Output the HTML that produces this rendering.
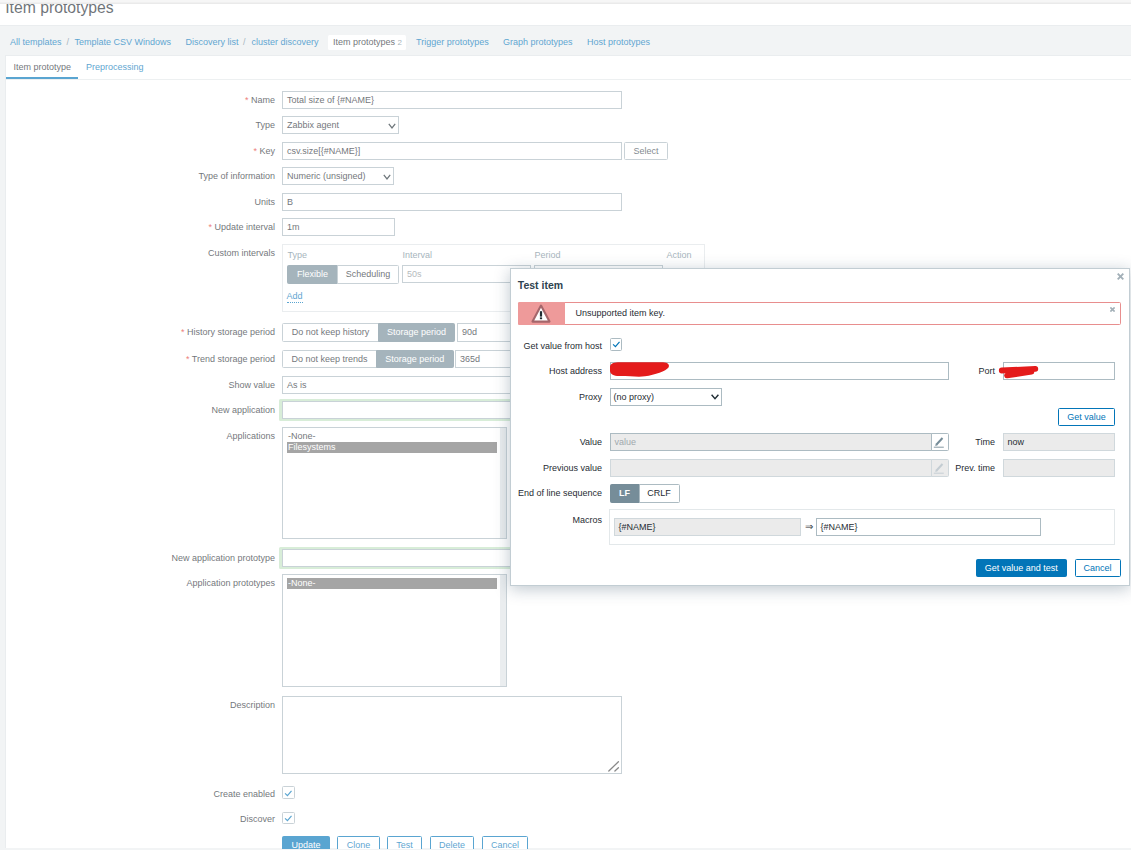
<!DOCTYPE html>
<html lang="en">
<head>
<meta charset="utf-8">
<title>Item prototypes</title>
<style>
*{box-sizing:border-box;margin:0;padding:0}
html,body{width:1131px;height:850px;overflow:hidden;background:#ebeef0}
body{font-family:"Liberation Sans",Arial,sans-serif;font-size:9px;color:#1f2c33;position:relative}
#page{position:absolute;left:0;top:0;width:1131px;height:850px;overflow:hidden;background:#ebeef0}
.abs{position:absolute}
a,.lnk{color:#0275b8;text-decoration:none}
.hdr{position:absolute;left:0;top:3.5px;width:1131px;height:22px;overflow:hidden;background:#fff;border-bottom:1px solid #dfe4e7}
h1{position:absolute;left:5.2px;top:-5.1px;font-size:15.75px;font-weight:normal;line-height:20px;color:#1f2c33;white-space:nowrap}
.nav{position:absolute;top:35px;height:15px;line-height:15px;white-space:nowrap}
.nav.sel{background:#fff;border-radius:1.5px;color:#1f2c33}
.sep{color:#768d99}
.content{position:absolute;left:5px;top:55px;width:1126px;height:793px;background:#fff;border:1px solid #dfe4e7;border-right:0;border-bottom:0}
.tabline{position:absolute;left:6px;top:79px;width:1125px;height:1px;background:#e4e8ea}
.tab{position:absolute;top:60px;height:15px;line-height:15px}
.tabsel{position:absolute;left:6px;top:76.75px;width:72px;height:2.25px;background:#0275b8}
.lbl{position:absolute;left:0;width:275px;text-align:right;height:18px;line-height:18px;white-space:nowrap}
.req{color:#e33734}
.inp{position:absolute;height:18px;line-height:16px;border:1px solid #acbbc2;background:#fff;padding:0 0 0 4px;white-space:nowrap;overflow:hidden}
.inp.dis{background:#ebebeb;border-color:#d0d8dc}
.ph{color:#a0a8ad}
.sel .arr{position:absolute;right:1.8px;top:5.5px;width:8px;height:6px}
.box{position:absolute;border:1px solid #dfe4e7;background:#fff}
.th{position:absolute;color:#768d99;height:12px;line-height:12px}
.rb{position:absolute;height:19px;line-height:17px;border:1px solid #acbbc2;background:#fff;text-align:center;white-space:nowrap}
.rb.on{background:#768d99;border-color:#768d99;color:#fff}
.rb.l{border-radius:1.5px 0 0 1.5px}
.rb.r{border-radius:0 1.5px 1.5px 0}
.btn{position:absolute;height:18px;line-height:16px;border:1px solid #0275b8;border-radius:1.5px;text-align:center;white-space:nowrap;background:#fff;color:#0275b8}
.btn.pri{background:#0275b8;color:#fff}
.btn.grey{border-color:#acbbc2;color:#3c4a52}
.lst{position:absolute;border:1px solid #acbbc2;background:#fff}
.lst .sb{position:absolute;right:0;top:0;bottom:0;width:6.5px;background:#dfe4e7}
.opt{position:absolute;left:4px;height:11.2px;line-height:11.2px;padding-left:1px}
.opt.on{background:#767676;color:#fff}
.cb{position:absolute;width:12px;height:12px;border:1px solid #acbbc2;border-radius:1.5px;background:#fff}
.cb svg{position:absolute;left:1px;top:1.2px;width:8.6px;height:8.6px}
.green{position:absolute;border:3px solid #c4e3c4;border-radius:1.5px}
#ovl{position:absolute;left:0;top:0;width:1131px;height:850px;background:#fff;opacity:.35}
#dlg{position:absolute;left:510px;top:268px;width:620px;height:318px;background:#fff;border:1px solid #c2cdd3;box-shadow:0 3px 15px 0 rgba(20,55,80,.28)}
#dlgi{position:absolute;left:0;top:-1px;width:618px;height:317px;white-space:nowrap}
#dlg .lbl{left:0;width:91px}
#dlg h4{position:absolute;left:6.8px;top:9.5px;font-size:10.5px;line-height:14px;font-weight:bold;color:#2f4350}
.topstrip{position:absolute;left:0;top:0;width:1131px;height:3.5px;background:linear-gradient(#f6f6f6 0,#f6f6f6 2.4px,#eaeaea 2.6px,#eaeaea 3.5px)}
.bot{position:absolute;left:0;top:849px;width:1131px;height:1px;background:#ebeef0}
</style>
</head>
<body>
<div id="page">
  <div class="hdr"><h1>Item prototypes</h1></div>

  <a class="nav" style="left:10px">All templates</a>
  <span class="nav sep" style="left:66.5px">/</span>
  <a class="nav" style="left:74.4px">Template CSV Windows</a>
  <a class="nav" style="left:185.5px">Discovery list</a>
  <span class="nav sep" style="left:243px">/</span>
  <a class="nav" style="left:251.5px">cluster discovery</a>
  <span class="nav sel" style="left:328px;width:78px;padding-left:5px">Item prototypes <span class="sep" style="font-size:8px">2</span></span>
  <a class="nav" style="left:416px">Trigger prototypes</a>
  <a class="nav" style="left:503px">Graph prototypes</a>
  <a class="nav" style="left:587px">Host prototypes</a>

  <div class="content"></div>
  <div class="tabline"></div>
  <span class="tab" style="left:13.5px">Item prototype</span>
  <a class="tab" style="left:86px">Preprocessing</a>
  <div class="tabsel"></div>

  <!-- form -->
  <div class="lbl" style="top:91px"><span class="req">*</span> Name</div>
  <div class="inp" style="left:282px;top:91px;width:340px">Total size of {#NAME}</div>

  <div class="lbl" style="top:116px">Type</div>
  <div class="inp sel" style="left:282px;top:116px;width:117px">Zabbix agent<svg class="arr" viewBox="0 0 8 6"><path d="M0.8 0.8 L4 4.9 L7.2 0.8" fill="none" stroke="#1f2c33" stroke-width="1.2"/></svg></div>

  <div class="lbl" style="top:142px"><span class="req">*</span> Key</div>
  <div class="inp" style="left:282px;top:142px;width:340px">csv.size[{#NAME}]</div>
  <div class="btn grey" style="left:624px;top:142px;width:44px">Select</div>

  <div class="lbl" style="top:167px">Type of information</div>
  <div class="inp sel" style="left:282px;top:167px;width:112px">Numeric (unsigned)<svg class="arr" viewBox="0 0 8 6"><path d="M0.8 0.8 L4 4.9 L7.2 0.8" fill="none" stroke="#1f2c33" stroke-width="1.2"/></svg></div>

  <div class="lbl" style="top:193px">Units</div>
  <div class="inp" style="left:282px;top:193px;width:340px">B</div>

  <div class="lbl" style="top:218px"><span class="req">*</span> Update interval</div>
  <div class="inp" style="left:282px;top:218px;width:113px">1m</div>

  <div class="lbl" style="top:244px">Custom intervals</div>
  <div class="box" style="left:282px;top:244px;width:423px;height:67.5px"></div>
  <span class="th" style="left:287.5px;top:249px">Type</span>
  <span class="th" style="left:402.5px;top:249px">Interval</span>
  <span class="th" style="left:534.5px;top:249px">Period</span>
  <span class="th" style="left:666.5px;top:249px">Action</span>
  <div class="rb on l" style="left:287px;top:265px;width:51px">Flexible</div>
  <div class="rb r" style="left:337px;top:265px;width:62px">Scheduling</div>
  <div class="inp" style="left:402px;top:265px;width:129px"><span class="ph" style="color:#8d9599">50s</span></div>
  <div class="inp" style="left:534px;top:265px;width:129px"><span class="ph" style="color:#8d9599">1-7,00:00-24:00</span></div>
  <span class="abs lnk" style="left:286.5px;top:291px;line-height:11px;border-bottom:1px dotted #0275b8">Add</span>

  <div class="lbl" style="top:323px"><span class="req">*</span> History storage period</div>
  <div class="rb l" style="left:282px;top:323px;width:97px">Do not keep history</div>
  <div class="rb on r" style="left:378px;top:323px;width:77px">Storage period</div>
  <div class="inp" style="left:457px;top:323px;width:113px;height:19px;line-height:17.5px">90d</div>

  <div class="lbl" style="top:350px"><span class="req">*</span> Trend storage period</div>
  <div class="rb l" style="left:282px;top:350px;width:95px;height:18px;line-height:16px">Do not keep trends</div>
  <div class="rb on r" style="left:376px;top:350px;width:77.5px;height:18px;line-height:16px">Storage period</div>
  <div class="inp" style="left:455px;top:350px;width:113px">365d</div>

  <div class="lbl" style="top:376px">Show value</div>
  <div class="inp sel" style="left:282px;top:376px;width:260px">As is</div>

  <div class="lbl" style="top:401px">New application</div>
  <div class="green" style="left:279px;top:399px;width:346px;height:22px"></div>
  <div class="inp" style="left:282px;top:401px;width:340px;height:17.6px"></div>

  <div class="lbl" style="top:427px">Applications</div>
  <div class="lst" style="left:282px;top:427px;width:225px;height:112px">
    <div class="opt" style="top:3px;width:210px">-None-</div>
    <div class="opt on" style="top:14.2px;width:210px">Filesystems</div>
    <div class="sb"></div>
  </div>

  <div class="lbl" style="top:549px">New application prototype</div>
  <div class="green" style="left:279px;top:547px;width:346px;height:22px"></div>
  <div class="inp" style="left:282px;top:549px;width:340px;height:17.6px"></div>

  <div class="lbl" style="top:574px">Application prototypes</div>
  <div class="lst" style="left:282px;top:574px;width:225px;height:113px">
    <div class="opt on" style="top:3px;width:210px">-None-</div>
    <div class="sb"></div>
  </div>

  <div class="lbl" style="top:696px">Description</div>
  <div class="inp" style="left:282px;top:696px;width:340px;height:78px">
    <svg class="abs" style="right:1px;bottom:1px;width:11px;height:11px;overflow:visible" viewBox="0 0 11 11"><path d="M-0.2 10 L9.4 0.8 M5.9 10 L9.4 6.8" stroke="#4b4b4b" stroke-width="1.3" stroke-linecap="round" fill="none"/></svg>
  </div>

  <div class="lbl" style="top:784.5px">Create enabled</div>
  <div class="cb" style="left:282px;top:786.4px;width:12.6px;height:12.6px"><svg viewBox="0 0 8 8"><path d="M1 4 L3.2 6.2 L7 1.8" fill="none" stroke="#0275b8" stroke-width="1.1"/></svg></div>
  <div class="lbl" style="top:809.5px">Discover</div>
  <div class="cb" style="left:282px;top:812px;width:12.6px;height:11.6px"><svg viewBox="0 0 8 8"><path d="M1 4 L3.2 6.2 L7 1.8" fill="none" stroke="#0275b8" stroke-width="1.1"/></svg></div>

  <div class="btn pri" style="left:282px;top:836px;width:48px;font-weight:normal">Update</div>
  <div class="btn" style="left:337px;top:836px;width:43px">Clone</div>
  <div class="btn" style="left:387px;top:836px;width:35px">Test</div>
  <div class="btn" style="left:430px;top:836px;width:44px">Delete</div>
  <div class="btn" style="left:482px;top:836px;width:46px">Cancel</div>

  <div class="bot"></div>
  <div id="ovl"></div>
  <div class="topstrip"></div>

  <!-- dialog -->
  <div id="dlg"><div id="dlgi">
    <h4>Test item</h4>
    <svg class="abs" style="left:605.5px;top:5px;width:7px;height:7px" viewBox="0 0 7 7"><path d="M0.7 0.7 L6.3 6.3 M6.3 0.7 L0.7 6.3" stroke="#a3b0b8" stroke-width="1.9" fill="none"/></svg>

    <div class="abs" style="left:7px;top:34px;width:603px;height:23px;border:1px solid #e88e8e;border-radius:1.5px;background:#fff"></div>
    <div class="abs" style="left:7px;top:34px;width:47px;height:23px;background:#ee9a9a;border-radius:1.5px 0 0 1.5px"></div>
    <svg class="abs" style="left:19px;top:34.5px;width:24px;height:22px" viewBox="0 0 24 22"><path d="M11 2.6 L19.5 18.6 L2.5 18.6 Z" fill="#fff" stroke="#a5666b" stroke-width="2.1" stroke-linejoin="round"/><rect x="9.9" y="8.2" width="2.2" height="5.4" fill="#1f2c33"/><rect x="9.9" y="14.4" width="2.2" height="1.8" fill="#1f2c33"/></svg>
    <span class="abs" style="left:64.5px;top:37.5px;line-height:14px">Unsupported item key.</span>
    <svg class="abs" style="left:598.5px;top:38.8px;width:5px;height:5px" viewBox="0 0 5 5"><path d="M0.4 0.4 L4.6 4.6 M4.6 0.4 L0.4 4.6" stroke="#a3b0b8" stroke-width="1.6" fill="none"/></svg>

    <div class="lbl" style="top:68.5px">Get value from host</div>
    <div class="cb" style="left:99px;top:70.3px;width:12px;height:12.6px"><svg viewBox="0 0 8 8"><path d="M1 4 L3.2 6.2 L7 1.8" fill="none" stroke="#0275b8" stroke-width="1.1"/></svg></div>

    <div class="lbl" style="top:93.5px">Host address</div>
    <div class="inp" style="left:98.5px;top:93.5px;width:339.5px"></div>
    <svg class="abs" style="left:0;top:0;width:618px;height:317px;overflow:visible" viewBox="0 0 618 317"><path d="M99 99 C99 95.5 103 94.2 109 94.2 L152 94.3 C157 94.5 159 97 157.5 99.5 C155 103 144 107 134 108.3 C127 109.2 119 108 109 108 C103 108.2 99.5 106.5 99 103 Z" fill="#e41b1b"/></svg>
    <div class="lbl" style="left:393px;top:93.5px">Port</div>
    <div class="inp" style="left:491.5px;top:93.5px;width:112px"></div>
    <svg class="abs" style="left:0;top:0;width:618px;height:317px;overflow:visible" viewBox="0 0 618 317"><path d="M490.8 102.5 L524.3 100.8" stroke="#e41b1b" stroke-width="5.8" stroke-linecap="round" fill="none"/><path d="M496 107.5 L520.5 103.7" stroke="#e41b1b" stroke-width="5.6" stroke-linecap="round" fill="none"/></svg>

    <div class="lbl" style="top:120px">Proxy</div>
    <div class="inp sel" style="left:98.5px;top:120px;width:112px;padding-left:3px">(no proxy)<svg class="arr" style="top:4.8px" viewBox="0 0 8 6"><path d="M0.6 0.8 L4 4.7 L7.4 0.8" fill="none" stroke="#1f2c33" stroke-width="1.4"/></svg></div>

    <div class="btn" style="left:547px;top:139.5px;width:57px">Get value</div>

    <div class="lbl" style="top:164.5px">Value</div>
    <div class="inp dis" style="left:98.5px;top:164.5px;width:322px;border-color:#acbbc2"><span class="ph">value</span></div>
    <div class="inp" style="left:420px;top:164.5px;width:18px;padding:0;border-radius:0 1.5px 1.5px 0"><svg class="abs" style="left:1px;top:2.5px;width:12px;height:12px" viewBox="0 0 12 12"><path d="M3.3 8.7 L9.5 2" stroke="#768d99" stroke-width="2" fill="none"/><path d="M2.2 9.9 L2.9 7.6 L4.4 9.2 Z" fill="#768d99"/><path d="M0.8 11.2 H10.8" stroke="#768d99" stroke-width="0.9"/></svg></div>
    <div class="lbl" style="left:393px;top:164.5px">Time</div>
    <div class="inp dis" style="left:491.5px;top:164.5px;width:112px">now</div>

    <div class="lbl" style="top:190.5px">Previous value</div>
    <div class="inp dis" style="left:98.5px;top:190.5px;width:322px"></div>
    <div class="inp dis" style="left:420px;top:190.5px;width:18px;padding:0;border-radius:0 1.5px 1.5px 0"><svg class="abs" style="left:1px;top:2.5px;width:12px;height:12px" viewBox="0 0 12 12"><path d="M3.3 8.7 L9.5 2" stroke="#c3ccd2" stroke-width="2" fill="none"/><path d="M2.2 9.9 L2.9 7.6 L4.4 9.2 Z" fill="#c3ccd2"/><path d="M0.8 11.2 H10.8" stroke="#c3ccd2" stroke-width="0.9"/></svg></div>
    <div class="lbl" style="left:393px;top:190.5px">Prev. time</div>
    <div class="inp dis" style="left:491.5px;top:190.5px;width:112px"></div>

    <div class="lbl" style="top:215.5px">End of line sequence</div>
    <div class="rb on l" style="left:98.5px;top:215.5px;width:30px;font-weight:bold">LF</div>
    <div class="rb r" style="left:127.5px;top:215.5px;width:41px">CRLF</div>

    <div class="lbl" style="top:242.5px">Macros</div>
    <div class="box" style="left:98px;top:241px;width:506px;height:35.5px;border-color:#e3e8ea"></div>
    <div class="inp dis" style="left:102.5px;top:249.5px;width:187px">{#NAME}</div>
    <span class="abs" style="left:294px;top:249.5px;line-height:18px;font-size:10px">⇒</span>
    <div class="inp" style="left:304.5px;top:249.5px;width:225px">{#NAME}</div>

    <div class="btn pri" style="left:464.5px;top:290.5px;width:91.5px">Get value and test</div>
    <div class="btn" style="left:563.5px;top:290.5px;width:46px">Cancel</div>
  </div></div>
</div>
</body>
</html>
